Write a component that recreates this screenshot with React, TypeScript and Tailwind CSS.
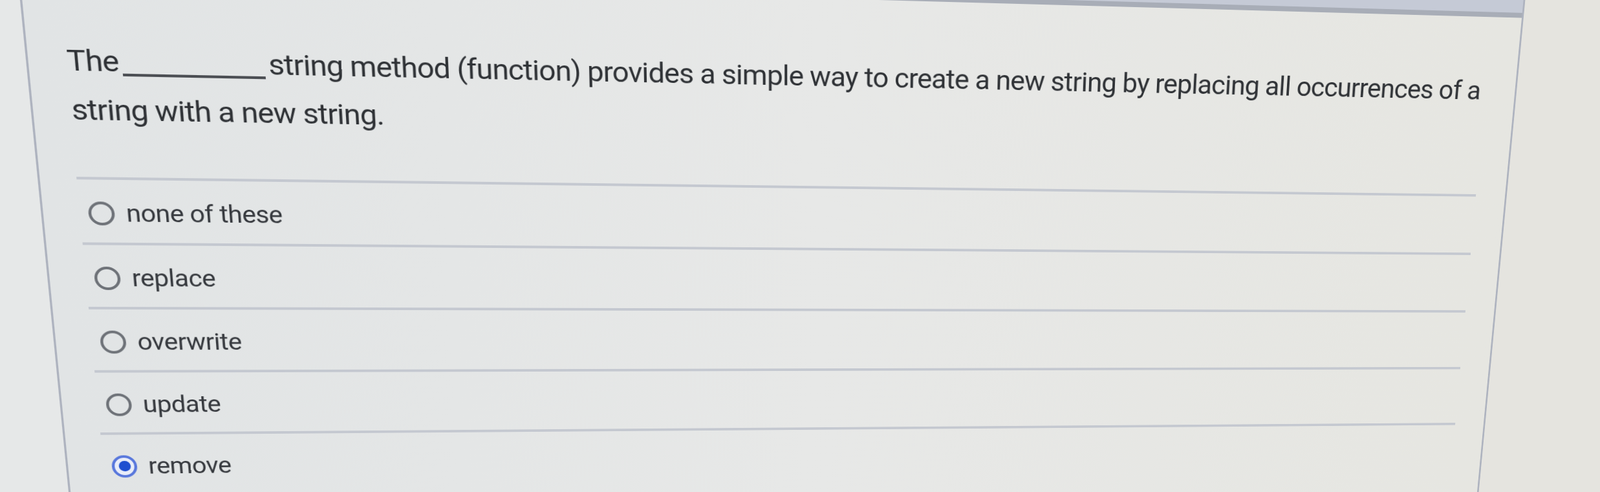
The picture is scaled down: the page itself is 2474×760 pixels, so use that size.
import { useMemo } from "react";

type Pt = [number, number];

const options = [
  { label: "none of these", checked: false },
  { label: "replace", checked: false },
  { label: "overwrite", checked: false },
  { label: "update", checked: false },
  { label: "remove", checked: true },
];

// separator ends in the flat layout, and where the photo shows them
const FLAT: Pt[] = [
  [130, 374],
  [2270, 374],
  [130, 770],
  [2270, 770],
];
const SHOT: Pt[] = [
  [118, 273],
  [2282, 300],
  [155, 668],
  [2250, 653],
];

// solve the 4-point homography and turn it into a css matrix3d
function perspective(src: Pt[], dst: Pt[]) {
  const A: number[][] = [];
  src.forEach(([x, y], i) => {
    const [X, Y] = dst[i];
    A.push([x, y, 1, 0, 0, 0, -x * X, -y * X, X]);
    A.push([0, 0, 0, x, y, 1, -x * Y, -y * Y, Y]);
  });
  const n = 8;
  for (let c = 0; c < n; c++) {
    let p = c;
    for (let r = c + 1; r < n; r++) if (Math.abs(A[r][c]) > Math.abs(A[p][c])) p = r;
    [A[c], A[p]] = [A[p], A[c]];
    for (let r = 0; r < n; r++) {
      if (r === c) continue;
      const f = A[r][c] / A[c][c];
      for (let k = c; k <= n; k++) A[r][k] -= f * A[c][k];
    }
  }
  const [a, b, c, d, e, f, g, k] = A.map((row, i) => row[n] / row[i]);
  return `matrix3d(${a},${d},0,${g},${b},${e},0,${k},0,0,1,0,${c},${f},0,1)`;
}

function Radio({ checked }: { checked: boolean }) {
  if (checked) {
    return (
      <span className="flex h-9 w-9 shrink-0 items-center justify-center rounded-full border-4 border-[#5877dc] bg-[#e9edf9]">
        <span className="h-[17px] w-[17px] rounded-full bg-[#1f4fd0]" />
      </span>
    );
  }
  return <span className="h-9 w-9 shrink-0 rounded-full border-4 border-[#6e7278]" />;
}

export default function App() {
  const transform = useMemo(() => perspective(FLAT, SHOT), []);

  return (
    <div className="h-[760px] w-[2474px] overflow-hidden bg-[#e6e8e8] font-['Roboto','Noto_Sans',sans-serif]">
      <div className="flex h-[960px] w-[2700px] origin-top-left" style={{ transform }}>
        <div className="w-[77px] shrink-0" />

        <div className="flex w-[2246px] shrink-0 flex-col border-x-[3px] border-[#aeb3bf] bg-linear-to-r from-[#e1e4e5] via-[#e7e8e7] to-[#e6e6e1]">
          <div className="h-[75px] bg-[#c5cad6]" />
          <div className="h-[8px] bg-[#a8adb7]" />

          <p className="whitespace-nowrap pl-[52px] pt-[83px] text-[43px] leading-[72px] tracking-[-0.9px] text-[#2f3236]">
            The{" "}
            <span className="mx-[-5px] inline-block w-[196px] border-b-4 border-[#4b4e53] align-[-7px]" />{" "}
            string method (function) provides a simple way to create a new string by replacing all
            occurrences of a
            <br />
            string with a new string.
          </p>

          <ul className="ml-[50px] mr-[50px] mt-[64px]">
            {options.map((o) => (
              <li
                key={o.label}
                className="flex h-[99px] items-center gap-[16px] border-t-4 border-[#c4c8d0] pl-[12px] pt-[6px]"
              >
                <Radio checked={o.checked} />
                <span className="text-[37px] tracking-[-0.5px] text-[#36393e]">{o.label}</span>
              </li>
            ))}
          </ul>
        </div>

        <div className="flex-1 bg-[#e5e4df]" />
      </div>
    </div>
  );
}
